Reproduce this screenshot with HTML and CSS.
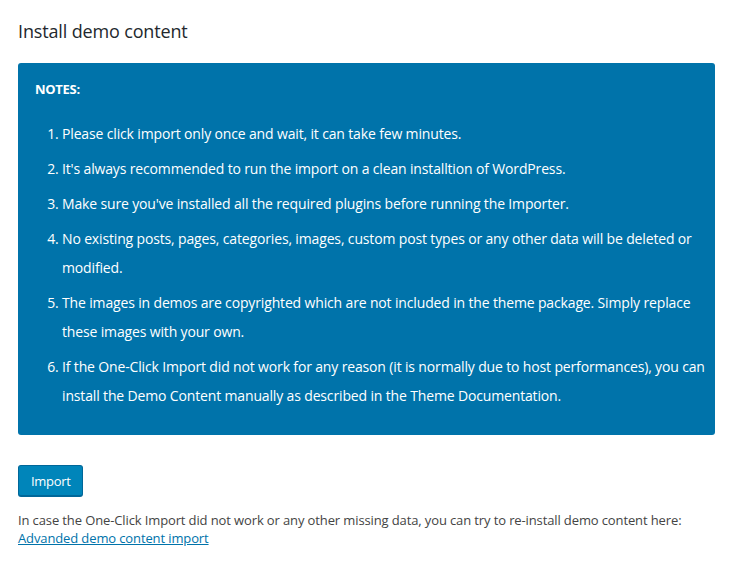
FILE: index.html
```html
<!DOCTYPE html>
<html>
<head>
<meta charset="utf-8">
<link rel="stylesheet" href="styles.css">
</head>
<body>
<div class="wrap">
  <h2 class="title">Install demo content</h2>
  <div class="notes">
    <p class="notes-head">NOTES:</p>
    <ol class="notes-list">
      <li>Please click import only once and wait, it can take few minutes.</li>
      <li>It's always recommended to run the import on a clean installtion of WordPress.</li>
      <li>Make sure you've installed all the required plugins before running the Importer.</li>
      <li>No existing posts, pages, categories, images, custom post types or any other data will be deleted or modified.</li>
      <li>The images in demos are copyrighted which are not included in the theme package. Simply replace these images with your own.</li>
      <li>If the One-Click Import did not work for any reason (it is normally due to host performances), you can install the Demo Content manually as described in the Theme Documentation.</li>
    </ol>
  </div>
  <button class="btn">Import</button>
  <p class="help">In case the One-Click Import did not work or any other missing data, you can try to re-install demo content here:<br><a href="#" class="link">Advanded demo content import</a></p>
</div>
</body>
</html>
```
FILE: styles.css
```css
html, body { margin: 0; padding: 0; background: #fff; }
body {
  font-family: "Open Sans", "Noto Sans", sans-serif;
  font-size: 13px;
  color: #444;
}
.wrap { padding: 0 15px 0 18px; }
.title {
  margin: 0;
  padding-top: 19px;
  font-size: 18px;
  font-weight: 400;
  line-height: 24px;
  color: #23282d;
  letter-spacing: -0.15px;
}
.notes {
  margin-top: 20px;
  background: #0073aa;
  border-radius: 3px;
  color: #fff;
  padding: 16px 2px 24px 17px;
  height: 332px;
}
.notes-head {
  margin: 0;
  font-weight: 700;
  line-height: 20px;
  letter-spacing: -0.3px;
}
.notes-list {
  margin: 20px 0 0;
  padding-left: 27px;
  font-size: 14px;
  letter-spacing: -0.15px;
}
.notes-list li {
  line-height: 29px;
  margin-bottom: 6px;
}
.btn {
  margin-top: 30px;
  display: block;
  background: #0085ba;
  border: 1px solid #006799;
  border-bottom-width: 2px;
  border-radius: 3px;
  color: #fff;
  font-family: inherit;
  font-size: 13px;
  letter-spacing: -0.3px;
  height: 32px;
  padding: 0 12px;
  width: 65px;
}
.help {
  margin: 14px 0 0;
  line-height: 18px;
  letter-spacing: -0.12px;
}
.link { color: #0073aa; text-decoration: underline; }
```
